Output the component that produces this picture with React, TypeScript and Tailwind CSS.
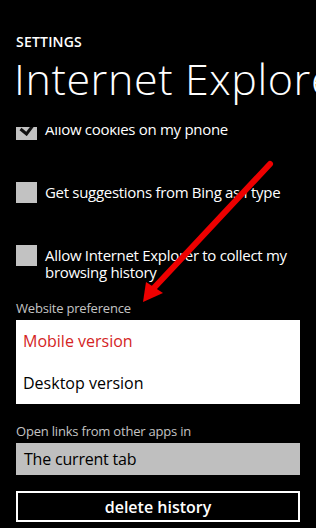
import React from "react";

const Checkbox = ({ checked }: { checked?: boolean }) => (
  <div className="w-[21px] h-[21px] bg-[#c2c2c2] shrink-0 flex items-center justify-center">
    {checked && (
      <svg width="15" height="12" viewBox="0 0 15 12">
        <path d="M1.5 5 L7.5 10 L13.5 2" fill="none" stroke="#111" strokeWidth="3" />
      </svg>
    )}
  </div>
);

const Option = ({ label, checked }: { label: React.ReactNode; checked?: boolean }) => (
  <div className="flex items-start gap-[8px]">
    <Checkbox checked={checked} />
    <div className="text-[15px] leading-[17px] tracking-[-0.3px] text-white pt-[2px] whitespace-nowrap">{label}</div>
  </div>
);

export default function App() {
  return (
    <div
      className="relative w-[316px] h-[528px] bg-black overflow-hidden text-white"
      style={{ fontFamily: '"Open Sans", "Noto Sans", sans-serif' }}
    >
      <div className="pl-[16px] pt-[32px]">
        <div className="text-[14px] leading-[20px] font-semibold tracking-[0.2px]">SETTINGS</div>
        <div className="text-[43px] leading-[54px] font-light whitespace-nowrap -ml-[2px] tracking-[0.6px]">
          Internet Explorer
        </div>
      </div>

      <div className="mt-[21px] h-[401px] overflow-hidden px-[16px]">
        <div className="-mt-[8px] flex flex-col">
          <Option checked label="Allow cookies on my phone" />
          <div className="h-[42px]" />
          <Option label="Get suggestions from Bing as I type" />
          <div className="h-[42px]" />
          <Option
            label={
              <>
                Allow Internet Explorer to collect my
                <br />
                browsing history
              </>
            }
          />

          <div className="mt-[18px] text-[13px] leading-[18px] tracking-[-0.2px] text-[#c4c4c4]">Website preference</div>
          <div className="mt-[3px] bg-white h-[84px] flex flex-col justify-center px-[7px]">
            <div className="text-[16px] leading-[42px] text-[#d42424]">Mobile version</div>
            <div className="text-[16px] leading-[42px] text-black">Desktop version</div>
          </div>

          <div className="mt-[18px] text-[13px] leading-[18px] tracking-[-0.2px] text-[#c4c4c4]">Open links from other apps in</div>
          <div className="mt-[3px] bg-[#bfbfbf] h-[32px] flex items-center px-[8px] text-[16px] tracking-[-0.2px] text-black">
            The current tab
          </div>

          <div className="mt-[16px] h-[31px] border-2 border-white flex items-center justify-center text-[16px] font-semibold">
            delete history
          </div>
        </div>
      </div>

      <svg className="absolute left-0 top-0 pointer-events-none" width="316" height="528" viewBox="0 0 316 528">
        <line x1="270" y1="164" x2="152" y2="290" stroke="#ee0000" strokeWidth="6" strokeLinecap="round" />
        <polygon points="143,302 146,282 163,293" fill="#ee0000" />
      </svg>
    </div>
  );
}
